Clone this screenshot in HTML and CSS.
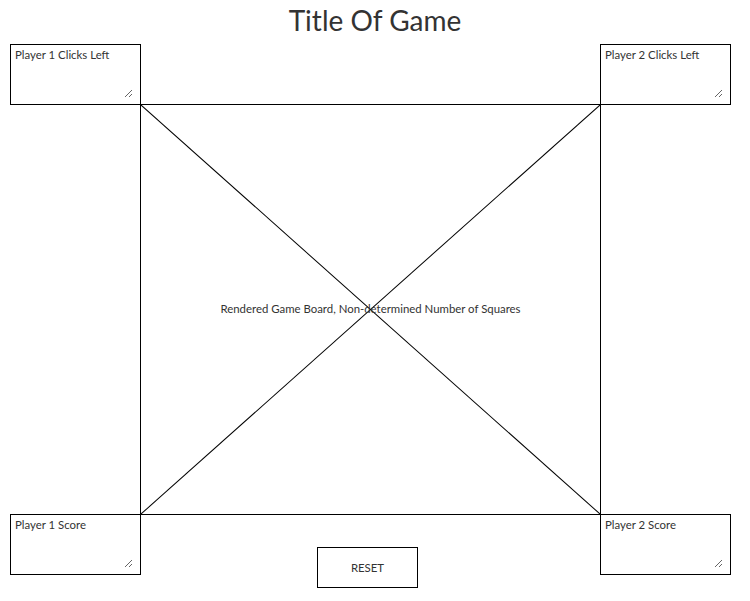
FILE: index.html
```html
<!DOCTYPE html>
<html lang="en">

<head>
    <meta charset="UTF-8">
    <meta name="viewport" content="width=device-width, initial-scale=1.0">
    <title>Title Of Game</title>
    <link rel="stylesheet" href="styles.css">
</head>

<body>
    <div id="game-container">
        <h1 class="game-title">Title Of Game</h1>

        <div id="game-grid">
            <div class="player-box top-left">
                <textarea>Player 1 Clicks Left</textarea>
            </div>
            <div class="player-box top-right">
                <textarea>Player 2 Clicks Left</textarea>
            </div>

            <div id="game-board">
                <svg class="board-cross" viewBox="0 0 100 100" preserveAspectRatio="none">
                    <line x1="0" y1="0" x2="100" y2="100" vector-effect="non-scaling-stroke" />
                    <line x1="100" y1="0" x2="0" y2="100" vector-effect="non-scaling-stroke" />
                </svg>
                <span class="board-label">Rendered Game Board, Non-determined Number of Squares</span>
            </div>

            <div class="player-box bottom-left">
                <textarea>Player 1 Score</textarea>
            </div>
            <button type="button" class="reset-button">RESET</button>
            <div class="player-box bottom-right">
                <textarea>Player 2 Score</textarea>
            </div>
        </div>
    </div>
</body>

</html>
```

FILE: styles.css
```css
body {
    font-family: "Lato", "Liberation Sans", sans-serif;
    margin: 0;
    background-color: #ffffff;
    color: #333333;
}

#game-container {
    padding: 0 10px;
}

.game-title {
    margin: 0;
    height: 44px;
    line-height: 40px;
    font-size: 28px;
    font-weight: 400;
    text-align: center;
}

#game-grid {
    display: grid;
    grid-template-columns: 130px 460px 131px;
    grid-template-rows: 60px 410px auto;
}

.player-box {
    width: 131px;
    height: 61px;
    box-sizing: border-box;
    padding: 0 7px 6px 0;
    border: 1px solid #000000;
    background: #ffffff;
    position: relative;
    z-index: 1;
}

.player-box textarea {
    display: block;
    width: 100%;
    height: 100%;
    box-sizing: border-box;
    margin: 0;
    padding: 3px 4px 4px;
    border: none;
    outline: none;
    font-family: inherit;
    font-size: 11.4px;
    color: #333333;
    background: transparent;
}

.top-left { grid-column: 1; grid-row: 1; }
.top-right { grid-column: 3; grid-row: 1; }
.bottom-left { grid-column: 1; grid-row: 3; align-self: start; }
.bottom-right { grid-column: 3; grid-row: 3; align-self: start; }

#game-board {
    grid-column: 2;
    grid-row: 2;
    width: 461px;
    height: 411px;
    box-sizing: border-box;
    border: 1px solid #000000;
    position: relative;
    display: flex;
    align-items: center;
    justify-content: center;
}

.board-cross {
    position: absolute;
    inset: 0;
    width: 100%;
    height: 100%;
}

.board-cross line {
    stroke: #000000;
    stroke-width: 1;
}

.board-label {
    position: relative;
    margin-top: -2px;
    font-size: 11.4px;
}

.reset-button {
    grid-column: 2;
    grid-row: 3;
    align-self: start;
    justify-self: start;
    margin: 33px 0 0 177px;
    width: 101px;
    height: 41px;
    border: 1px solid #000000;
    border-radius: 0;
    background: #ffffff;
    font-family: inherit;
    font-size: 11.4px;
    color: #333333;
}
```
